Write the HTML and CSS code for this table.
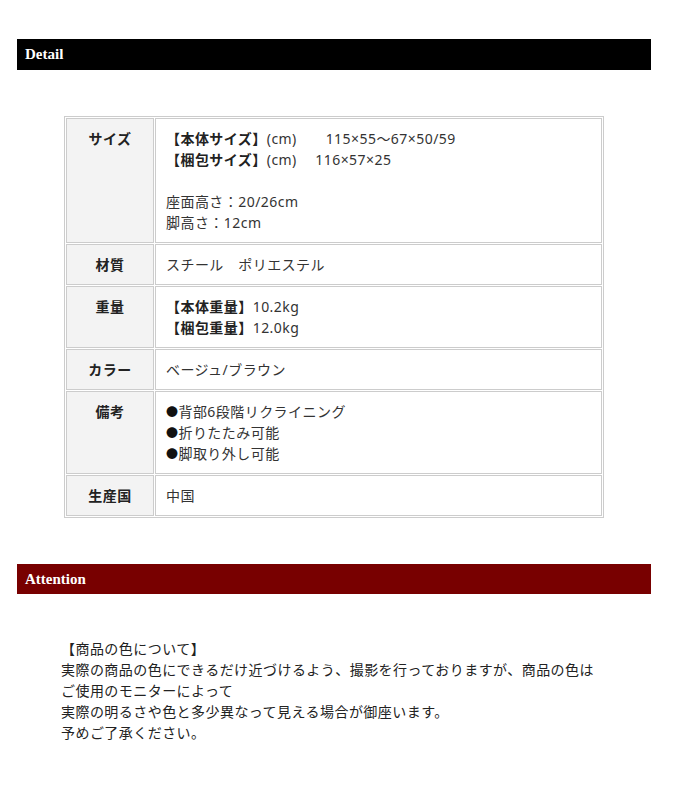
FILE: index.html
```html
<!DOCTYPE html>
<html lang="ja">
<head>
    <meta charset="UTF-8">
    <meta name="viewport" content="width=device-width, initial-scale=1.0">
    <title>Detail</title>
    <link rel="stylesheet" href="styles.css">
</head>
<body>
    <div class="wrap">
        <h2 class="bar">Detail</h2>

        <table class="spec">
            <tr>
                <th>サイズ</th>
                <td>
                    <b>【本体サイズ】</b>(cm)　　115×55～67×50/59<br>
                    <b>【梱包サイズ】</b>(cm)　&nbsp;116×57×25<br>
                    <br>
                    座面高さ：20/26cm<br>
                    脚高さ：12cm
                </td>
            </tr>
            <tr>
                <th>材質</th>
                <td>スチール　ポリエステル</td>
            </tr>
            <tr>
                <th>重量</th>
                <td>
                    <b>【本体重量】</b>10.2kg<br>
                    <b>【梱包重量】</b>12.0kg
                </td>
            </tr>
            <tr>
                <th>カラー</th>
                <td>ベージュ/ブラウン</td>
            </tr>
            <tr>
                <th>備考</th>
                <td>
                    <span class="dot">●</span>背部6段階リクライニング<br>
                    <span class="dot">●</span>折りたたみ可能<br>
                    <span class="dot">●</span>脚取り外し可能
                </td>
            </tr>
            <tr>
                <th>生産国</th>
                <td>中国</td>
            </tr>
        </table>

        <h2 class="bar bar-red">Attention</h2>

        <p class="note">
            【商品の色について】<br>
            実際の商品の色にできるだけ近づけるよう、撮影を行っておりますが、商品の色は<br>
            ご使用のモニターによって<br>
            実際の明るさや色と多少異なって見える場合が御座います。<br>
            予めご了承ください。
        </p>
    </div>
</body>
</html>
```

FILE: styles.css
```css
/* Page */
body {
    margin: 0;
    background-color: #fff;
    color: #333;
    font-family: "Noto Sans", "Noto Sans CJK JP", sans-serif;
    font-size: 14px;
    line-height: 21px;
    letter-spacing: 0.45px;
}

.wrap {
    width: 634px;
    margin-left: 17px;
    padding-top: 39px;
}

/* Section bars */
.bar {
    margin: 0;
    height: 31px;
    padding-left: 8px;
    background-color: #000;
    color: #fff;
    font-family: "Liberation Serif", "DejaVu Serif", serif;
    font-size: 15px;
    font-weight: bold;
    line-height: 30px;
    letter-spacing: 0;
}

.bar-red {
    height: 30px;
    background-color: #780000;
}

/* Spec table */
.spec {
    width: 540px;
    margin: 46px auto;
    border: 1px solid #ccc;
    border-spacing: 1px;
}

.spec th,
.spec td {
    border: 1px solid #ccc;
    padding: 9px 10px;
    vertical-align: top;
    text-align: left;
}

.spec th {
    width: 66px;
    background-color: #f3f3f3;
    text-align: center;
    font-weight: bold;
    color: #222;
}

.spec b {
    font-weight: bold;
    color: #222;
}

.dot {
    font-size: 12px;
    line-height: 0;
    color: #111;
}

/* Attention text */
.note {
    margin: 44px 0 0 44px;
    color: #222;
}
```
